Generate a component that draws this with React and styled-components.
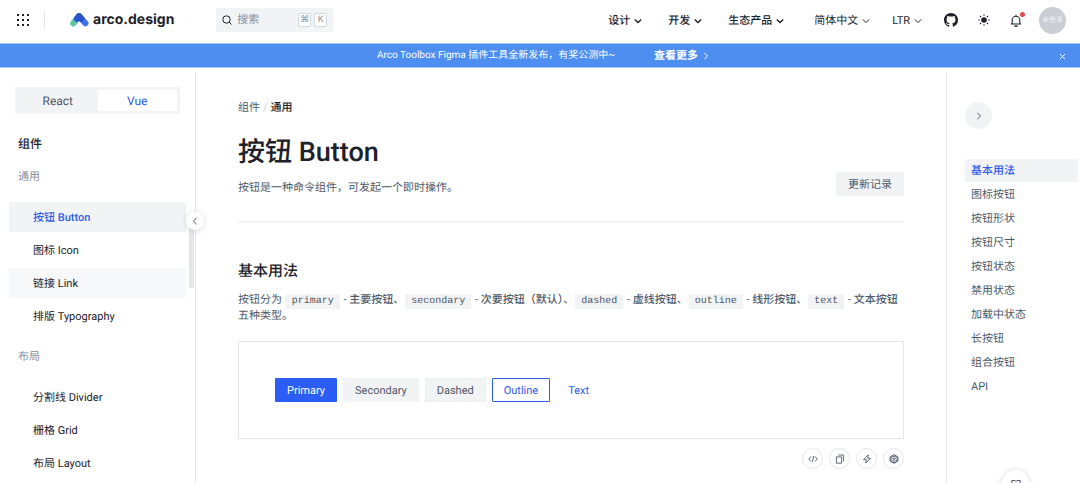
import React, { useState } from 'react'
import styled, { createGlobalStyle } from 'styled-components'

const docs = ['按钮 Button', '图标 Icon', '链接 Link', '排版 Typography']
const layoutDocs = ['分割线 Divider', '栅格 Grid', '布局 Layout']
const anchors = [
    '基本用法', '图标按钮', '按钮形状', '按钮尺寸', '按钮状态',
    '禁用状态', '加载中状态', '长按钮', '组合按钮', 'API'
]
const menus = ['设计', '开发', '生态产品']

// turn is the rotation of a caret that points down
const Caret = ({ turn = 0, size = 8, weight = 1 }) => (
    <svg width={size} height={size} viewBox="0 0 8 8" fill="none" stroke="currentColor" strokeWidth={weight} aria-hidden="true">
        <path d="M.8 2.4 4 5.6 7.2 2.4" transform={`rotate(${turn} 4 4)`} />
    </svg>
)

const AppsIcon = () => (
    <svg width="12" height="12" viewBox="0 0 12 12" fill="#1d2129" aria-hidden="true">
        {[0, 5, 10].map(y => [0, 5, 10].map(x => (
            <rect key={`${x}-${y}`} x={x} y={y} width="2" height="2" />
        )))}
    </svg>
)

const Logo = () => (
    <svg width="19" height="14" viewBox="0 0 19 14" fill="none" strokeWidth="6.2" strokeLinecap="round" aria-hidden="true">
        <path d="M3.3 10.3 8.6 3.6" stroke="#5cc6a6" />
        <path d="M9.2 3.4 15.4 10.3" stroke="#3f74f2" />
        <path d="M7 5.6 9 3.4M9.2 3.4 11.2 5.6" stroke="#2a52cd" />
    </svg>
)

const SearchIcon = () => (
    <svg width="10" height="10" viewBox="0 0 10 10" fill="none" stroke="#1d2129" aria-hidden="true">
        <circle cx="4.5" cy="4.5" r="3.7" />
        <path d="M7.2 7.2 9.5 9.5" />
    </svg>
)

const GithubIcon = () => (
    <svg width="14" height="14" viewBox="0 0 16 16" fill="#1d2129" aria-hidden="true">
        <path d="M8 0C3.58 0 0 3.58 0 8c0 3.54 2.29 6.53 5.47 7.59.4.07.55-.17.55-.38 0-.19-.01-.82-.01-1.49-2.01.37-2.53-.49-2.69-.94-.09-.23-.48-.94-.82-1.13-.28-.15-.68-.52-.01-.53.63-.01 1.08.58 1.23.82.72 1.21 1.87.87 2.33.66.07-.52.28-.87.51-1.07-1.78-.2-3.64-.89-3.64-3.95 0-.87.31-1.59.82-2.15-.08-.2-.36-1.02.08-2.12 0 0 .67-.21 2.2.82a7.6 7.6 0 0 1 4 0c1.53-1.04 2.2-.82 2.2-.82.44 1.1.16 1.92.08 2.12.51.56.82 1.27.82 2.15 0 3.07-1.87 3.75-3.65 3.95.29.25.54.73.54 1.48 0 1.07-.01 1.93-.01 2.2 0 .21.15.46.55.38A8.01 8.01 0 0 0 16 8c0-4.42-3.58-8-8-8Z" />
    </svg>
)

const SunIcon = () => (
    <svg width="12" height="12" viewBox="0 0 12 12" fill="#1d2129" stroke="#1d2129" strokeWidth="1.2" aria-hidden="true">
        <circle cx="6" cy="6" r="2.8" stroke="none" />
        <path d="M6 .4v1.4M6 10.2v1.4M.4 6h1.4M10.2 6h1.4M2 2l1 1M9 9l1 1M2 10l1-1M9 3l1-1" />
    </svg>
)

const BellIcon = () => (
    <svg width="12" height="13" viewBox="0 0 12 13" fill="none" stroke="#1d2129" strokeWidth="1.1" aria-hidden="true">
        <path d="M2.2 10V6a3.8 3.8 0 0 1 7.6 0v4M.8 10h10.4M6 .8v1.4M4.2 12.1h3.6" />
    </svg>
)

const CloseIcon = () => (
    <svg width="7" height="7" viewBox="0 0 7 7" fill="none" stroke="currentColor" aria-hidden="true">
        <path d="M1 1l5 5M6 1 1 6" />
    </svg>
)

const CodeIcon = () => (
    <svg width="10" height="10" viewBox="0 0 10 10" fill="none" stroke="currentColor" strokeWidth="0.9" aria-hidden="true">
        <path d="M3 2.4.8 5 3 7.6M7 2.4 9.2 5 7 7.6M5.6 2 4.4 8" />
    </svg>
)

const CopyIcon = () => (
    <svg width="10" height="10" viewBox="0 0 10 10" fill="none" stroke="currentColor" strokeWidth="0.9" aria-hidden="true">
        <path d="M3.4 1h5.2v6.4M1.4 2.9h5.2v6.3H1.4z" />
    </svg>
)

const BoltIcon = () => (
    <svg width="10" height="10" viewBox="0 0 10 10" fill="none" stroke="currentColor" strokeWidth="0.9" strokeLinejoin="round" aria-hidden="true">
        <path d="M6.2.9 1.6 5.7h2.7L3.8 9.1l4.6-4.8H5.7z" />
    </svg>
)

const BoxIcon = () => (
    <svg width="10" height="10" viewBox="0 0 10 10" fill="none" stroke="currentColor" strokeLinejoin="round" aria-hidden="true">
        <path d="M5 .7 8.9 2.9v4.2L5 9.3 1.1 7.1V2.9zM1.6 3.2 5 5l3.4-1.8M5 5v4M3 1.8l2 1.1 2-1.1M1.2 5.2l1.7.9v1.8M8.8 5.2l-1.7.9v1.8" />
    </svg>
)

const BookIcon = () => (
    <svg width="10" height="10" viewBox="0 0 10 10" fill="none" stroke="currentColor" aria-hidden="true">
        <path d="M.8 9V1.5h3L5 2.4l1.2-.9h3V9" />
    </svg>
)

const App = () => {
    const [framework, setFramework] = useState('Vue')
    const [banner, setBanner] = useState(true)

    return (
        <Page>
            <GlobalStyle />
            <Header>
                <IconButton aria-label="应用"><AppsIcon /></IconButton>
                <Separator />
                <Brand href="#home"><Logo />arco.design</Brand>
                <Search>
                    <SearchIcon />
                    <SearchInput aria-label="搜索" placeholder="搜索" />
                    <Key>⌘</Key>
                    <Key>K</Key>
                </Search>
                <Menu>
                    {menus.map(name => (
                        <MenuButton key={name} $strong>{name}<Caret weight={1.4} /></MenuButton>
                    ))}
                </Menu>
                <Tools>
                    <MenuButton>简体中文<Caret /></MenuButton>
                    <MenuButton>LTR<Caret /></MenuButton>
                    <Icons>
                        <IconButton aria-label="GitHub"><GithubIcon /></IconButton>
                        <IconButton aria-label="主题"><SunIcon /></IconButton>
                        <IconButton aria-label="消息"><BellIcon /><Dot /></IconButton>
                    </Icons>
                </Tools>
                <Avatar>未登录</Avatar>
            </Header>

            {banner && (
                <Banner>
                    <BannerText>Arco Toolbox Figma 插件工具全新发布，有奖公测中~</BannerText>
                    <BannerLink href="#more">查看更多<Caret turn={-90} /></BannerLink>
                    <BannerClose aria-label="关闭" onClick={() => setBanner(false)}><CloseIcon /></BannerClose>
                </Banner>
            )}

            <Body>
                <Sidebar>
                    <Switch>
                        {['React', 'Vue'].map(name => (
                            <SwitchButton key={name} $on={framework === name} onClick={() => setFramework(name)}>
                                {name}
                            </SwitchButton>
                        ))}
                    </Switch>
                    <SideTitle>组件</SideTitle>
                    <SideGroup>通用</SideGroup>
                    <SideList>
                        {docs.map((name, i) => (
                            <SideLink key={name} href="#doc" $active={i === 0} $hovered={i === 2}>{name}</SideLink>
                        ))}
                    </SideList>
                    <SideGroup>布局</SideGroup>
                    <SideList>
                        {layoutDocs.map(name => <SideLink key={name} href="#doc">{name}</SideLink>)}
                    </SideList>
                    <ScrollThumb />
                    <Collapse aria-label="收起"><Caret turn={90} /></Collapse>
                </Sidebar>

                <Main>
                    <Breadcrumb>
                        <span>组件</span><Slash>/</Slash><b>通用</b>
                    </Breadcrumb>
                    <Intro>
                        <div>
                            <Title>按钮 Button</Title>
                            <Text>按钮是一种命令组件，可发起一个即时操作。</Text>
                        </div>
                        <Button>更新记录</Button>
                    </Intro>
                    <SectionTitle>基本用法</SectionTitle>
                    <Text>
                        按钮分为 <Code>primary</Code> - <b>主要按钮</b>、<Code>secondary</Code> - <b>次要按钮（默认）</b>、<Code>dashed</Code> - <b>虚线按钮</b>、<Code>outline</Code> - <b>线形按钮</b>、<Code>text</Code> - <b>文本按钮</b> 五种类型。
                    </Text>
                    <Demo>
                        <Button $kind="primary">Primary</Button>
                        <Button>Secondary</Button>
                        <Button $kind="dashed">Dashed</Button>
                        <Button $kind="outline">Outline</Button>
                        <Button $kind="text">Text</Button>
                    </Demo>
                    <Actions>
                        <RoundButton aria-label="代码"><CodeIcon /></RoundButton>
                        <RoundButton aria-label="复制"><CopyIcon /></RoundButton>
                        <RoundButton aria-label="在线运行"><BoltIcon /></RoundButton>
                        <RoundButton aria-label="沙盒"><BoxIcon /></RoundButton>
                    </Actions>
                </Main>

                <Aside>
                    <AsideToggle aria-label="收起目录"><Caret turn={-90} /></AsideToggle>
                    <AnchorList>
                        {anchors.map((name, i) => (
                            <Anchor key={name} href="#anchor" $active={i === 0}>{name}</Anchor>
                        ))}
                    </AnchorList>
                </Aside>
            </Body>
            <FloatButton aria-label="手册"><BookIcon /></FloatButton>
        </Page>
    )
}

export default App

const GlobalStyle = createGlobalStyle`
    * {
        box-sizing: border-box;
    }
    body {
        margin: 0;
        background: #fff;
        color: #1d2129;
        font-family: Roboto, "Noto Sans CJK SC", sans-serif;
        font-size: 11px;
        line-height: 16px;
        text-rendering: geometricPrecision;
    }
    button, input {
        font: inherit;
        color: inherit;
        text-rendering: inherit;
        border: 0;
        background: none;
        padding: 0;
    }
    a {
        color: inherit;
        text-decoration: none;
    }
    svg {
        display: block;
        flex: none;
    }
`

const Page = styled.div`
    display: flex;
    flex-direction: column;
    height: 100vh;
    overflow: hidden;
`

const Header = styled.header`
    display: flex;
    align-items: center;
    flex: none;
    height: 43px;
    padding: 0 14px 3px 17px;
`

const IconButton = styled.button`
    position: relative;
    display: flex;
`

const Separator = styled.span`
    width: 1px;
    height: 18px;
    margin: 0 25px 0 15px;
    background: #e5e6eb;
`

const Brand = styled.a`
    display: flex;
    align-items: center;
    gap: 4px;
    font-family: Inter, sans-serif;
    font-size: 14px;
    font-weight: 700;
`

const Search = styled.label`
    display: flex;
    align-items: center;
    gap: 3px;
    width: 117px;
    height: 24px;
    margin-left: 42px;
    padding: 0 6px;
    background: #f2f3f5;
`

const SearchInput = styled.input`
    flex: 1;
    min-width: 0;
    padding-left: 2px;
    outline: none;

    &::placeholder {
        color: #86909c;
    }
`

const Key = styled.kbd`
    width: 13px;
    height: 14px;
    border: 1px solid #d5d8de;
    border-radius: 2px;
    background: #fff;
    color: #86909c;
    font-family: Inter, "DejaVu Sans", sans-serif;
    font-size: 9px;
    line-height: 12px;
    text-align: center;
`

const Menu = styled.nav`
    display: flex;
    gap: 26px;
    margin-left: auto;
`

const MenuButton = styled.button`
    display: flex;
    align-items: center;
    gap: 4px;
    padding-top: 1px;
    font-weight: ${props => (props.$strong ? 500 : 400)};
`

const Tools = styled.div`
    display: flex;
    align-items: center;
    gap: 22px;
    margin-left: 30px;
`

const Icons = styled.div`
    display: flex;
    align-items: center;
    gap: 20px;
`

const Dot = styled.span`
    position: absolute;
    top: -2px;
    right: -3px;
    width: 5px;
    height: 5px;
    border-radius: 50%;
    background: #e04a4a;
`

const Avatar = styled.div`
    display: flex;
    align-items: center;
    justify-content: center;
    width: 27px;
    height: 27px;
    margin-left: 17px;
    border-radius: 50%;
    background: #c9cdd4;
    color: #f2f3f5;
    font-size: 7px;
`

const Banner = styled.div`
    display: flex;
    align-items: center;
    flex: none;
    height: 25px;
    padding: 1px 14px 0 28px;
    border-top: 1px solid #a7c7f8;
    border-bottom: 1px solid #a7c7f8;
    background: #4e8ef0;
    color: #fff;
    font-size: 10px;
`

const BannerText = styled.span`
    margin-left: auto;
`

const BannerLink = styled.a`
    display: flex;
    align-items: center;
    gap: 4px;
    margin: 0 auto 0 39px;
    font-size: 11px;
    font-weight: 700;
`

const BannerClose = styled.button`
    display: flex;
`

const Body = styled.div`
    display: flex;
    flex: 1;
    min-height: 0;
    padding-top: 4px;
`

const Sidebar = styled.aside`
    position: relative;
    flex: none;
    width: 196px;
    padding: 15px 9px 0;
    border-right: 1px solid #e5e6eb;
`

const Switch = styled.div`
    display: flex;
    height: 27px;
    margin: 0 6px;
    padding: 3px;
    background: #f2f3f5;
`

const SwitchButton = styled.button`
    flex: 1;
    background: ${props => (props.$on ? '#fff' : 'transparent')};
    color: ${props => (props.$on ? '#2f5ce8' : '#4e5969')};
    font-size: 12px;
`

const SideTitle = styled.h2`
    margin: 20px 9px 0;
    font-size: 12px;
    font-weight: 500;
    line-height: 20px;
`

const SideGroup = styled.h3`
    margin: 15px 9px 17px;
    color: #86909c;
    font-size: 11px;
    font-weight: 400;
    line-height: 16px;
`

const SideList = styled.nav`
    display: flex;
    flex-direction: column;
    gap: 3px;
    margin-bottom: 18px;
`

const SideLink = styled.a`
    padding: 8px 24px 6px;
    background: ${props => (props.$active ? '#f2f3f5' : props.$hovered ? '#f7f8fa' : 'transparent')};
    color: ${props => (props.$active ? '#2f5ce8' : '#1d2129')};
    font-weight: ${props => (props.$active ? 500 : 400)};
`

const ScrollThumb = styled.span`
    position: absolute;
    top: 152px;
    right: 1px;
    width: 5px;
    height: 64px;
    border-radius: 3px;
    background: #e5e6eb;
`

const Collapse = styled.button`
    position: absolute;
    top: 140px;
    right: -9px;
    display: flex;
    align-items: center;
    justify-content: center;
    width: 18px;
    height: 18px;
    border-radius: 50%;
    background: #fff;
    color: #4e5969;
    box-shadow: 0 1px 6px rgba(0, 0, 0, 0.15);
`

const Main = styled.main`
    flex: 1;
    min-width: 0;
    padding: 28px 42px 0;
`

const Breadcrumb = styled.nav`
    display: flex;
    color: #4e5969;

    b {
        color: #1d2129;
        font-weight: 500;
    }
`

const Slash = styled.span`
    margin: 0 3px;
    color: #c9cdd4;
`

const Intro = styled.div`
    display: flex;
    align-items: flex-end;
    justify-content: space-between;
    padding: 16px 0 25px;
    border-bottom: 2px solid #f2f3f5;
`

const Title = styled.h1`
    margin: 0 0 8px;
    font-size: 27px;
    font-weight: 500;
    line-height: 40px;
`

const Text = styled.p`
    margin: 0;
    color: #4e5969;

    b {
        font-weight: 500;
    }
`

const SectionTitle = styled.h2`
    margin: 36px 0 9px;
    font-size: 15px;
    font-weight: 500;
    line-height: 24px;
`

const Code = styled.code`
    margin: 0 1px;
    padding: 2px 6px;
    background: #f2f3f5;
    font-family: "Liberation Mono", monospace;
    font-size: 10px;
    line-height: 10px;
`

const kinds = {
    primary: 'background: #2b5df5; color: #fff;',
    dashed: 'background: #f2f3f5; border: 1px dashed #ebecef;',
    outline: 'background: #fff; border: 1px solid #2f5ce8; color: #2f5ce8;',
    text: 'background: transparent; color: #2f5ce8;'
}

const Button = styled.button`
    height: 24px;
    padding: 1px 11px 0;
    border: 1px solid transparent;
    border-radius: 1px;
    background: #f2f3f5;
    color: #4e5969;
    ${props => kinds[props.$kind]}
`

const Demo = styled.div`
    display: flex;
    flex-wrap: wrap;
    gap: 6px;
    margin-top: 17px;
    padding: 36px;
    border: 1px solid #e5e6eb;
`

const Actions = styled.div`
    display: flex;
    justify-content: flex-end;
    gap: 6px;
    margin-top: 9px;
`

const RoundButton = styled.button`
    display: flex;
    align-items: center;
    justify-content: center;
    width: 21px;
    height: 21px;
    border: 1px solid #e5e6eb;
    border-radius: 50%;
    color: #4e5969;
`

const Aside = styled.aside`
    flex: none;
    width: 134px;
    padding: 30px 2px 0 18px;
    border-left: 1px solid #e5e6eb;
`

const AsideToggle = styled.button`
    display: flex;
    align-items: center;
    justify-content: center;
    width: 27px;
    height: 27px;
    margin-bottom: 30px;
    border-radius: 50%;
    background: #f2f3f5;
    color: #4e5969;
`

const AnchorList = styled.nav`
    display: flex;
    flex-direction: column;
    gap: 1px;
`

const Anchor = styled.a`
    padding: 4px 6px 3px;
    background: ${props => (props.$active ? '#f2f3f5' : 'transparent')};
    color: ${props => (props.$active ? '#2f5ce8' : '#4e5969')};
    font-weight: ${props => (props.$active ? 500 : 400)};
`

const FloatButton = styled.button`
    position: fixed;
    right: 51px;
    bottom: -14px;
    display: flex;
    align-items: center;
    justify-content: center;
    width: 27px;
    height: 27px;
    border-radius: 50%;
    background: #fff;
    color: #4e5969;
    box-shadow: 0 1px 6px rgba(0, 0, 0, 0.18);
`
